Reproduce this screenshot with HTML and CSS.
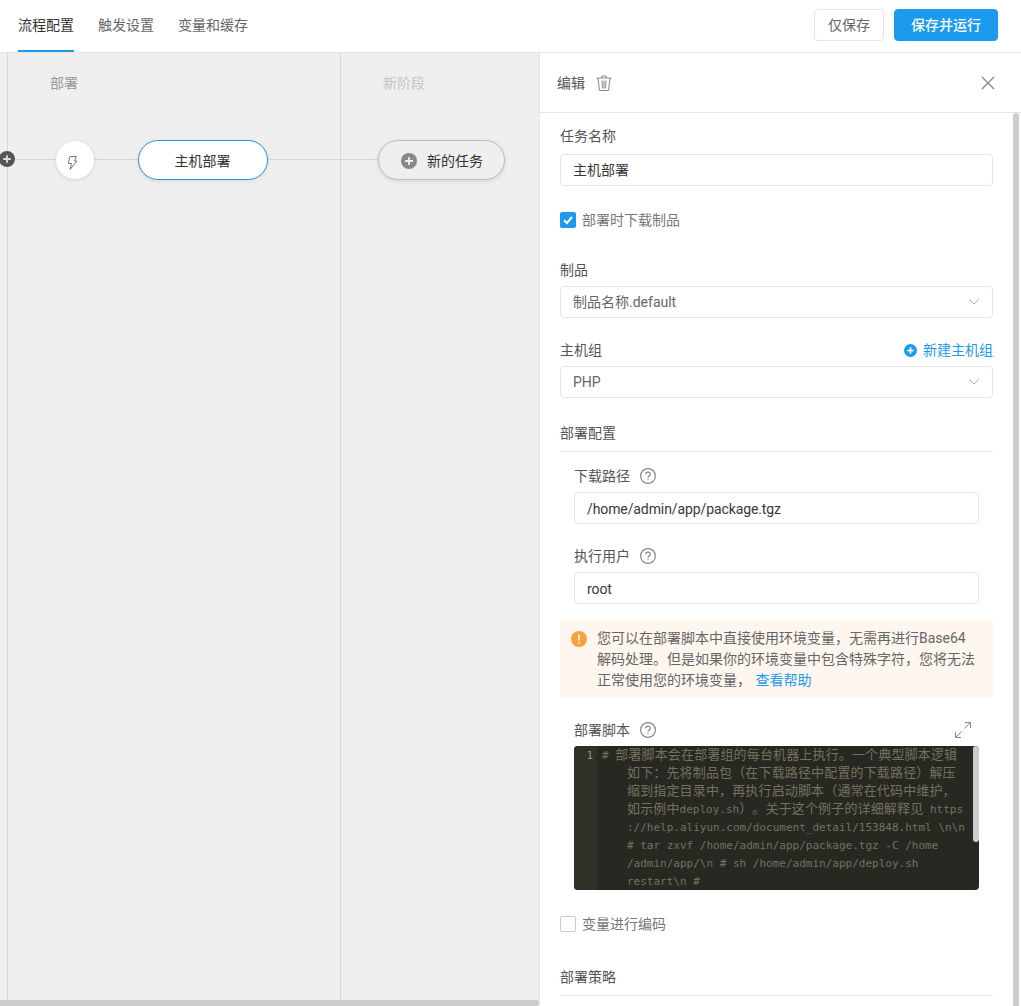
FILE: index.html
```html
<!DOCTYPE html>
<html lang="zh-CN">
<head>
<meta charset="utf-8">
<title>流程配置</title>
<link rel="stylesheet" href="styles.css">
</head>
<body>
<header class="topbar">
  <nav class="tabs">
    <a class="tab active">流程配置</a>
    <a class="tab">触发设置</a>
    <a class="tab">变量和缓存</a>
  </nav>
  <div class="actions">
    <button class="btn">仅保存</button>
    <button class="btn primary">保存并运行</button>
  </div>
</header>
<main class="main">
  <section class="canvas">
    <div class="divider d1"></div>
    <div class="divider d2"></div>
    <div class="wire"></div>
    <div class="stage s1">部署</div>
    <div class="stage s2">新阶段</div>
    <div class="dot-add"><svg viewBox="0 0 16 16" width="16" height="16"><circle cx="8" cy="8" r="8" fill="#555"/><path d="M8 4.2v7.6M4.2 8h7.6" stroke="#ddd" stroke-width="1.8"/></svg></div>
    <div class="trigger"><svg class="bolt" viewBox="0 0 14 16" width="14" height="16" fill="none" stroke="#777" stroke-width="1"><path d="M5 1.500h6.500L9.500 6H12L5 14.500 6.500 8.500H3.200z"/></svg></div>
    <div class="node task">主机部署</div>
    <div class="node new"><svg viewBox="0 0 16 16" width="16" height="16"><circle cx="8" cy="8" r="8" fill="#888"/><path d="M8 4v8M4 8h8" stroke="#eee" stroke-width="1.8"/></svg><span>新的任务</span></div>
    <div class="hbar"></div>
  </section>
  <aside class="panel">
    <div class="panel-head">
      <span class="panel-title">编辑</span>
      <svg class="trash" viewBox="0 0 16 16" width="16" height="16" fill="none" stroke="#888" stroke-width="1"><path d="M.5 3h15M5.500 3l.5-2h4l.5 2M2 3l1.500 12.500h9L14 3M6 5.500l.5 8M8 5.500v8M10 5.500l-.5 8"/></svg>
      <svg class="close" viewBox="0 0 14 14" width="14" height="14" stroke="#888" stroke-width="1.400"><path d="M1 1l12 12M13 1L1 13"/></svg>
    </div>
    <div class="panel-body">
      <div class="field f1">
        <label class="label">任务名称</label>
        <div class="input dark">主机部署</div>
      </div>
      <div class="check-row c1"><span class="check on"><svg viewBox="0 0 16 16" width="16" height="16" fill="none" stroke="#fff" stroke-width="2"><path d="M4 8.200l3 2.800 5-6"/></svg></span><span>部署时下载制品</span></div>
      <div class="field f2">
        <label class="label">制品</label>
        <div class="input select">制品名称.default<svg class="chev" viewBox="0 0 10 6" width="10" height="6" fill="none" stroke="#aaa"><path d="M.5.500L5 5 9.500.500"/></svg></div>
      </div>
      <div class="field f3">
        <div class="label-row">
          <label class="label">主机组</label>
          <a class="new-link"><svg viewBox="0 0 14 14" width="13" height="13"><circle cx="7" cy="7" r="7" fill="#1b9aee"/><path d="M7 3.500v7M3.500 7h7" stroke="#fff" stroke-width="1.800"/></svg>新建主机组</a>
        </div>
        <div class="input select">PHP<svg class="chev" viewBox="0 0 10 6" width="10" height="6" fill="none" stroke="#aaa"><path d="M.5.500L5 5 9.500.500"/></svg></div>
      </div>
      <h3 class="section s-config">部署配置</h3>
      <div class="sub">
        <div class="field f4">
          <label class="label help-label">下载路径<svg class="help" viewBox="0 0 16 16" width="16" height="16" fill="none" stroke="#888" stroke-width="1.200"><circle cx="8" cy="8" r="7.400"/><path d="M5.800 6.300c0-3 4.500-3 4.500-.1 0 1.800-2.300 1.700-2.300 3.600M8 11v1.300"/></svg></label>
          <div class="input dark latin">/home/admin/app/package.tgz</div>
        </div>
        <div class="field f5">
          <label class="label help-label">执行用户<svg class="help" viewBox="0 0 16 16" width="16" height="16" fill="none" stroke="#888" stroke-width="1.200"><circle cx="8" cy="8" r="7.400"/><path d="M5.800 6.300c0-3 4.500-3 4.500-.1 0 1.800-2.300 1.700-2.300 3.600M8 11v1.300"/></svg></label>
          <div class="input dark latin">root</div>
        </div>
      </div>
      <div class="alert">
        <svg class="alert-icon" viewBox="0 0 16 16" width="16" height="16"><circle cx="8" cy="8" r="8" fill="#fa9f3e"/><path d="M8 3.500v6M8 11v1.500" stroke="#fff" stroke-width="1.600"/></svg>
        <p>您可以在部署脚本中直接使用环境变量，无需再进行Base64解码处理。但是如果你的环境变量中包含特殊字符，您将无法正常使用您的环境变量， <a>查看帮助</a></p>
      </div>
      <div class="sub">
        <div class="script-head">
          <label class="label help-label">部署脚本<svg class="help" viewBox="0 0 16 16" width="16" height="16" fill="none" stroke="#888" stroke-width="1.200"><circle cx="8" cy="8" r="7.400"/><path d="M5.800 6.300c0-3 4.500-3 4.500-.1 0 1.800-2.300 1.700-2.300 3.600M8 11v1.300"/></svg></label>
          <svg class="expand" viewBox="0 0 16 16" width="16" height="16" fill="none" stroke="#888"><path d="M10 .5h5.500V6M15.500.5L9.500 6.500M6 15.500H.5V10M.5 15.500l6-6"/></svg>
        </div>
        <div class="editor">
          <div class="gutter">1</div>
          <div class="code">
            <div class="ln first"># <b>部署脚本会在部署组的每台机器上执行。一个典型脚本逻辑</b></div>
            <div class="ln"><b>如下：先将制品包（在下载路径中配置的下载路径）解压</b></div>
            <div class="ln"><b>缩到指定目录中，再执行启动脚本（通常在代码中维护，</b></div>
            <div class="ln"><b>如示例中</b>deploy.sh<b>）。关于这个例子的详细解释见</b> https</div>
            <div class="ln">://help.aliyun.com/document_detail/153848.html \n\n</div>
            <div class="ln"># tar zxvf /home/admin/app/package.tgz -C /home</div>
            <div class="ln">/admin/app/\n # sh /home/admin/app/deploy.sh</div>
            <div class="ln">restart\n #</div>
          </div>
          <div class="code-thumb"></div>
        </div>
      </div>
      <div class="check-row c2"><span class="check"></span><span>变量进行编码</span></div>
      <h3 class="section s-policy">部署策略</h3>
    </div>
    <div class="vbar"></div>
  </aside>
</main>
</body>
</html>
```
FILE: styles.css
```css
* { box-sizing: border-box; }
html, body { margin: 0; height: 100%; overflow: hidden; }
body { font: 14px/20px Roboto, "Noto Sans CJK SC", sans-serif; color: #383838; background: #fff; display: flex; flex-direction: column; }

.topbar { height: 53px; flex: none; display: flex; justify-content: space-between; border-bottom: 1px solid #e5e5e5; padding: 0 23px 0 18px; }
.tabs { display: flex; gap: 24px; }
.tab { height: 52px; line-height: 51px; color: #666; }
.tab.active { color: #333; border-bottom: 2px solid #1b9aee; }
.actions { display: flex; gap: 10px; padding-top: 9px; }
.btn { width: 70px; height: 32px; border: 1px solid #e5e5e5; border-radius: 4px; background: #fff; color: #666; font: inherit; padding: 0; }
.btn.primary { width: 104px; background: #1b9aee; border-color: #1b9aee; color: #fff; font-weight: 500; }

.main { flex: 1; display: flex; min-height: 0; }
.canvas { width: 540px; flex: none; position: relative; background: #efefef; border-right: 1px solid #e5e5e5; overflow: hidden; }
.divider { position: absolute; top: 0; bottom: 0; width: 1px; background: #d8d8d8; }
.d1 { left: 7px; }
.d2 { left: 340px; }
.wire { position: absolute; left: 0; top: 106px; width: 380px; height: 1px; background: #d8d8d8; }
.stage { position: absolute; top: 20px; color: #999; }
.s1 { left: 50px; }
.s2 { left: 383px; color: #c4c4c4; }
.dot-add { position: absolute; left: -1px; top: 98px; width: 16px; height: 16px; line-height: 0; }
.trigger { position: absolute; left: 56px; top: 88px; width: 38px; height: 38px; border-radius: 50%; background: #fff; box-shadow: 0 1px 4px rgba(0,0,0,.12); display: flex; align-items: center; justify-content: center; }
.bolt { margin: 6px 7px 0 0; }
.node { position: absolute; top: 87px; height: 40px; border-radius: 20px; display: flex; align-items: center; justify-content: center; color: #333; padding-top: 1px; }
.task { left: 138px; width: 130px; padding-right: 1px; background: #fff; border: 1px solid #1b9aee; box-shadow: 0 1px 4px rgba(0,0,0,.1); }
.new { left: 378px; width: 127px; gap: 10px; padding-left: 1px; background: #efefef; border: 1px solid #bdbdbd; box-shadow: 0 1px 4px rgba(0,0,0,.12); }
.hbar { position: absolute; left: 0; right: 0; bottom: 0; height: 6px; background: #ccc; border-radius: 0 3px 3px 0; }

.panel { flex: 1; position: relative; overflow: hidden; display: flex; flex-direction: column; }
.panel-head { height: 60px; flex: none; display: flex; align-items: center; padding: 0 26px 0 17px; border-bottom: 1px solid #e5e5e5; color: #555; }
.trash { margin-left: 11px; }
.close { margin-left: auto; }
.panel-body { flex: 1; padding: 0 28px 0 20px; overflow: hidden; }
.vbar { position: absolute; right: 2px; top: 60px; bottom: 0; width: 6px; background: #ccc; border-radius: 3px 3px 0 0; }

.label { display: block; color: #555; height: 20px; }
.field .input { margin-top: 6px; }
.f1 { padding-top: 13px; }
.f1 .input { margin-top: 8px; }
.input { height: 32px; border: 1px solid #e5e5e5; border-radius: 4px; padding: 0 12px; line-height: 30px; color: #666; position: relative; }
.input.dark { color: #383838; }
.input.latin { line-height: 32px; letter-spacing: -.1px; }
.chev { position: absolute; right: 13px; top: 12px; }
.label-row { display: flex; justify-content: space-between; }
.new-link { color: #1b9aee; display: flex; align-items: center; gap: 6px; }

.check-row { display: flex; align-items: center; gap: 6px; height: 20px; color: #777; }
.check { width: 16px; height: 16px; border: 1px solid #ccc; border-radius: 2px; display: block; line-height: 0; }
.check.on { background: #1b9aee; border: 0; }
.c1 { margin-top: 24px; }
.f2 { margin-top: 30px; }
.f3 { margin-top: 22px; }
.section { margin: 0; font: inherit; color: #555; padding-bottom: 8px; border-bottom: 1px solid #e5e5e5; }
.s-config { margin-top: 25px; }
.sub { padding: 0 14px; }
.f4 { margin-top: 14px; }
.f5 { margin-top: 22px; }
.help-label { display: flex; align-items: center; gap: 10px; }

.alert { margin-top: 16px; height: 78px; background: #fff6f0; border-radius: 4px; display: flex; padding: 8px 14px 0 11px; gap: 10px; line-height: 21px; }
.alert-icon { flex: none; margin-top: 3px; }
.alert p { margin: 0; color: #666; }
.alert a { color: #1b9aee; margin-left: 1px; }

.script-head { display: flex; justify-content: space-between; align-items: center; margin-top: 22px; height: 20px; margin-bottom: 6px; }
.expand { margin-right: 8px; }
.editor { height: 144px; background: #272822; border-radius: 4px; display: flex; position: relative; overflow: hidden; font: 11px/18px "DejaVu Sans Mono", "Noto Sans CJK SC", monospace; color: #75715e; text-spacing-trim: space-all; }
.gutter { width: 23px; flex: none; background: #2f3129; color: #8f908a; text-align: right; padding: 1px 4px 0 0; }
.code { flex: 1; padding: 1px 0 0 5px; }
.ln { padding-left: 25px; height: 18px; white-space: pre; line-height: 18px; }
.ln.first { padding-left: 0; }
.ln b { font-weight: 400; font-size: 13px; letter-spacing: .15px; line-height: 16px; vertical-align: top; }
.code-thumb { position: absolute; right: 0; top: 0; width: 6px; height: 96px; background: #ccc; border-radius: 3px; }

.c2 { margin-top: 24px; color: #777; }
.s-policy { margin-top: 33px; }
```
